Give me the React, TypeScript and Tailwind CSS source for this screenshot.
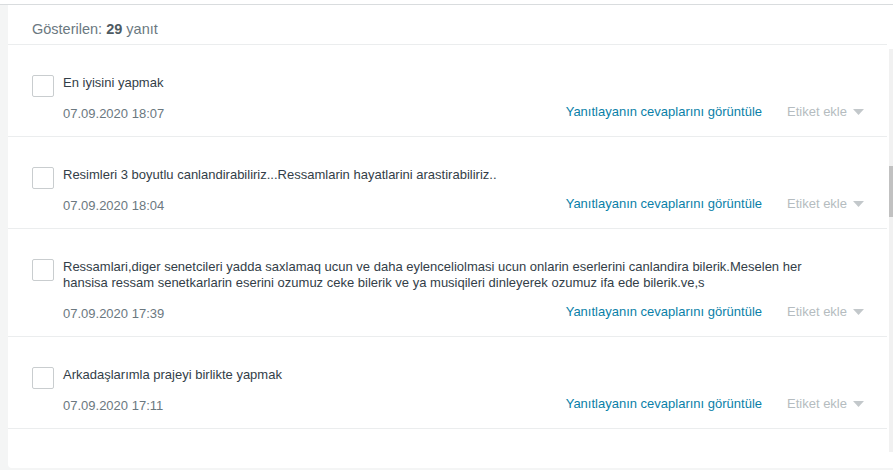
import React from 'react';

interface Response {
  id: number;
  lines: string[];
  date: string;
}

const responses: Response[] = [
  { id: 1, lines: ['En iyisini yapmak'], date: '07.09.2020 18:07' },
  { id: 2, lines: ['Resimleri 3 boyutlu canlandirabiliriz...Ressamlarin hayatlarini arastirabiliriz..'], date: '07.09.2020 18:04' },
  {
    id: 3,
    lines: [
      'Ressamlari,diger senetcileri yadda saxlamaq ucun ve daha eylenceliolmasi ucun onlarin eserlerini canlandira bilerik.Meselen her',
      'hansisa ressam senetkarlarin eserini ozumuz ceke bilerik ve ya musiqileri dinleyerek ozumuz ifa ede bilerik.ve,s',
    ],
    date: '07.09.2020 17:39',
  },
  { id: 4, lines: ['Arkadaşlarımla prajeyi birlikte yapmak'], date: '07.09.2020 17:11' },
];

const ResponseRow: React.FC<{ item: Response }> = ({ item }) => (
  <div className="border-t border-[#ebedee] pt-[30px] pb-[14px] pl-[24px] pr-[23px]">
    <div className="flex items-start">
      <div className="w-[22px] h-[22px] -mb-[6px] border border-[#c9cdcf] rounded-[2px] bg-white shrink-0" />
      <div className="ml-[9px] text-[13px] leading-[16px] text-[#333e48]">
        {item.lines.map((l, i) => (
          <div key={i}>{l}</div>
        ))}
      </div>
    </div>
    <div className="flex items-center mt-[15px] pl-[31px] h-[16px]">
      <span className="text-[13px] leading-[16px] text-[#6b787f]">{item.date}</span>
      <div className="ml-auto flex items-center -mt-[4px]">
        <span className="text-[13px] leading-[16px] text-[#0a7fa8]">Yanıtlayanın cevaplarını görüntüle</span>
        <span className="ml-[25px] text-[13px] leading-[16px] text-[#b5bcc0]">Etiket ekle</span>
        <svg width="11" height="6" viewBox="0 0 11 6" className="ml-[6px]">
          <path d="M0 0 L11 0 L5.5 6 Z" fill="#c3c8cb" />
        </svg>
      </div>
    </div>
  </div>
);

export default function App() {
  return (
    <div className="w-[893px] h-[470px] bg-white overflow-hidden flex flex-col" style={{ fontFamily: '"Liberation Sans", Arial, sans-serif' }}>
      <div className="h-[5px] bg-white border-b border-[#d9dcde] shrink-0" />
      <div className="flex flex-1 bg-[#f4f5f5] min-h-0">
        <div className="w-[8px] shrink-0" />
        <div className="flex-1 flex bg-white rounded-bl-[4px] mb-[2px]">
          <div className="flex-1 flex flex-col">
            <div className="pl-[24px] pt-[15px] h-[39px] text-[14.5px] leading-[18px] text-[#6b787f]">
              Gösterilen: <span className="font-bold text-[#4e5a62]">29</span> yanıt
            </div>
            {responses.map((r) => (
              <ResponseRow key={r.id} item={r} />
            ))}
            <div className="border-t border-[#ebedee]" />
          </div>
          <div className="w-[6px] shrink-0 pt-[44px] pb-[16px] flex">
            <div className="ml-[2px] w-[4px] bg-[#f1f1f1] flex flex-col">
              <div className="h-[117px]" />
              <div className="h-[51px] bg-[#c1c1c1]" />
            </div>
          </div>
        </div>
      </div>
    </div>
  );
}
